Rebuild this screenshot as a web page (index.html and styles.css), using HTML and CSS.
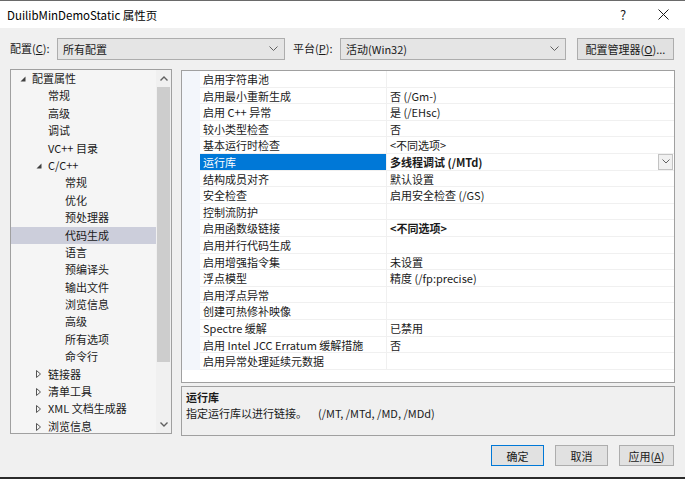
FILE: index.html
```html
<!DOCTYPE html>
<html lang="zh-CN">
<head>
    <meta charset="UTF-8">
    <title>DuilibMinDemoStatic 属性页</title>
    <link rel="stylesheet" href="styles.css">
</head>
<body>
<div class="dialog">
    <div class="titlebar">
        <span class="title">DuilibMinDemoStatic 属性页</span>
        <span class="help">?</span>
        <span class="close">
            <svg width="11" height="11" viewBox="0 0 11 11"><path d="M0.5 0.5 L10.5 10.5 M10.5 0.5 L0.5 10.5" stroke="#1a1a1a" stroke-width="1"/></svg>
        </span>
    </div>

    <div class="toolbar">
        <span class="lbl">配置(<u>C</u>):</span>
        <div class="combo combo-config">
            <span>所有配置</span>
            <svg class="chev" width="9" height="5" viewBox="0 0 9 5"><path d="M0.5 0.5 L4.5 4.5 L8.5 0.5" fill="none" stroke="#606060"/></svg>
        </div>
        <span class="lbl lbl-platform">平台(<u>P</u>):</span>
        <div class="combo combo-platform">
            <span>活动(Win32)</span>
            <svg class="chev" width="9" height="5" viewBox="0 0 9 5"><path d="M0.5 0.5 L4.5 4.5 L8.5 0.5" fill="none" stroke="#606060"/></svg>
        </div>
        <button class="btn btn-manager">配置管理器(<u>O</u>)...</button>
    </div>

    <div class="main">
        <div class="tree">
            <ul class="tree-list">
                <li class="node lv0"><span class="arrow"><svg width="6" height="6" viewBox="0 0 6 6"><path d="M5.5 0.5 L5.5 5.5 L0.5 5.5 Z" fill="#404040"/></svg></span>配置属性</li>
                <li class="node lv1"><span class="arrow"></span>常规</li>
                <li class="node lv1"><span class="arrow"></span>高级</li>
                <li class="node lv1"><span class="arrow"></span>调试</li>
                <li class="node lv1"><span class="arrow"></span>VC++ 目录</li>
                <li class="node lv1"><span class="arrow"><svg width="6" height="6" viewBox="0 0 6 6"><path d="M5.5 0.5 L5.5 5.5 L0.5 5.5 Z" fill="#404040"/></svg></span>C/C++</li>
                <li class="node lv2"><span class="arrow"></span>常规</li>
                <li class="node lv2"><span class="arrow"></span>优化</li>
                <li class="node lv2"><span class="arrow"></span>预处理器</li>
                <li class="node lv2 selected"><span class="arrow"></span>代码生成</li>
                <li class="node lv2"><span class="arrow"></span>语言</li>
                <li class="node lv2"><span class="arrow"></span>预编译头</li>
                <li class="node lv2"><span class="arrow"></span>输出文件</li>
                <li class="node lv2"><span class="arrow"></span>浏览信息</li>
                <li class="node lv2"><span class="arrow"></span>高级</li>
                <li class="node lv2"><span class="arrow"></span>所有选项</li>
                <li class="node lv2"><span class="arrow"></span>命令行</li>
                <li class="node lv1"><span class="arrow"><svg width="5" height="8" viewBox="0 0 5 8"><path d="M0.5 0.5 L4.5 4 L0.5 7.5 Z" fill="none" stroke="#555"/></svg></span>链接器</li>
                <li class="node lv1"><span class="arrow"><svg width="5" height="8" viewBox="0 0 5 8"><path d="M0.5 0.5 L4.5 4 L0.5 7.5 Z" fill="none" stroke="#555"/></svg></span>清单工具</li>
                <li class="node lv1"><span class="arrow"><svg width="5" height="8" viewBox="0 0 5 8"><path d="M0.5 0.5 L4.5 4 L0.5 7.5 Z" fill="none" stroke="#555"/></svg></span>XML 文档生成器</li>
                <li class="node lv1"><span class="arrow"><svg width="5" height="8" viewBox="0 0 5 8"><path d="M0.5 0.5 L4.5 4 L0.5 7.5 Z" fill="none" stroke="#555"/></svg></span>浏览信息</li>
            </ul>
            <div class="vscroll">
                <div class="sb-btn"><svg width="8" height="5" viewBox="0 0 8 5"><path d="M0.5 4.5 L4 1 L7.5 4.5" fill="none" stroke="#606060" stroke-width="1.4"/></svg></div>
                <div class="sb-track"><div class="sb-thumb"></div></div>
                <div class="sb-btn"><svg width="8" height="5" viewBox="0 0 8 5"><path d="M0.5 0.5 L4 4 L7.5 0.5" fill="none" stroke="#606060" stroke-width="1.4"/></svg></div>
            </div>
        </div>

        <div class="right">
            <div class="grid">
                <div class="row"><div class="gutter"></div><div class="name">启用字符串池</div><div class="value"></div></div>
                <div class="row"><div class="gutter"></div><div class="name">启用最小重新生成</div><div class="value">否 (/Gm-)</div></div>
                <div class="row"><div class="gutter"></div><div class="name">启用 C++ 异常</div><div class="value">是 (/EHsc)</div></div>
                <div class="row"><div class="gutter"></div><div class="name">较小类型检查</div><div class="value">否</div></div>
                <div class="row"><div class="gutter"></div><div class="name">基本运行时检查</div><div class="value">&lt;不同选项&gt;</div></div>
                <div class="row active"><div class="gutter"></div><div class="name">运行库</div><div class="value bold">多线程调试 (/MTd)<span class="drop"><svg width="8" height="5" viewBox="0 0 8 5"><path d="M0.5 0.5 L4 4 L7.5 0.5" fill="none" stroke="#606060"/></svg></span></div></div>
                <div class="row"><div class="gutter"></div><div class="name">结构成员对齐</div><div class="value">默认设置</div></div>
                <div class="row"><div class="gutter"></div><div class="name">安全检查</div><div class="value">启用安全检查 (/GS)</div></div>
                <div class="row"><div class="gutter"></div><div class="name">控制流防护</div><div class="value"></div></div>
                <div class="row"><div class="gutter"></div><div class="name">启用函数级链接</div><div class="value bold">&lt;不同选项&gt;</div></div>
                <div class="row"><div class="gutter"></div><div class="name">启用并行代码生成</div><div class="value"></div></div>
                <div class="row"><div class="gutter"></div><div class="name">启用增强指令集</div><div class="value">未设置</div></div>
                <div class="row"><div class="gutter"></div><div class="name">浮点模型</div><div class="value">精度 (/fp:precise)</div></div>
                <div class="row"><div class="gutter"></div><div class="name">启用浮点异常</div><div class="value"></div></div>
                <div class="row"><div class="gutter"></div><div class="name">创建可热修补映像</div><div class="value"></div></div>
                <div class="row"><div class="gutter"></div><div class="name">Spectre 缓解</div><div class="value">已禁用</div></div>
                <div class="row"><div class="gutter"></div><div class="name">启用 Intel JCC Erratum 缓解措施</div><div class="value">否</div></div>
                <div class="row"><div class="gutter"></div><div class="name">启用异常处理延续元数据</div><div class="value"></div></div>
            </div>
            <div class="desc">
                <div class="desc-title">运行库</div>
                <div class="desc-text"><span class="desc-main">指定运行库以进行链接。</span>(/MT, /MTd, /MD, /MDd)</div>
            </div>
        </div>
    </div>

    <div class="footer">
        <button class="btn btn-ok">确定</button>
        <button class="btn">取消</button>
        <button class="btn btn-apply">应用(<u>A</u>)</button>
    </div>
</div>
</body>
</html>
```

FILE: styles.css
```css
* {
    box-sizing: border-box;
}
body {
    margin: 0;
    font-family: "Noto Sans CJK SC", "Noto Sans", sans-serif;
    font-size: 11px;
    color: #1a1a1a;
    background-color: #f0f0f0;
}
u {
    text-decoration: underline;
    text-underline-offset: 1px;
}
.dialog {
    width: 685px;
    height: 479px;
    background-color: #f0f0f0;
    border-top: 1px solid #6a6a6a;
    border-bottom: 2px solid #2b2b2b;
    display: flex;
    flex-direction: column;
    overflow: hidden;
}
.titlebar {
    height: 27px;
    background-color: #fff;
    display: flex;
    align-items: center;
    padding-left: 7px;
}
.title {
    font-size: 11.5px;
    color: #000;
    flex: 1;
}
.help {
    font-size: 13px;
    color: #1a1a1a;
    width: 36px;
    text-align: center;
}
.close {
    width: 44px;
    display: flex;
    justify-content: center;
}
.toolbar {
    display: flex;
    align-items: center;
    height: 21px;
    margin-top: 10px;
    padding-left: 10px;
}
.lbl {
    width: 47px;
    line-height: 21px;
}
.lbl-platform {
    margin-left: 8px;
}
.combo {
    height: 22px;
    border: 1px solid #adadad;
    background-color: #e5e5e5;
    display: flex;
    align-items: center;
    justify-content: space-between;
    padding: 0 6px 0 5px;
}
.combo-config {
    width: 228px;
}
.combo-platform {
    width: 226px;
}
.btn {
    font-family: inherit;
    font-size: 11px;
    color: #1a1a1a;
    background-color: #e1e1e1;
    border: 1px solid #adadad;
    height: 21px;
    padding: 0;
    margin: 0;
}
.btn-manager {
    width: 97px;
    height: 22px;
    margin-left: 11px;
}
.main {
    display: flex;
    height: 367px;
    margin-top: 10px;
    padding-left: 10px;
}
.tree {
    width: 162px;
    height: 365px;
    border: 1px solid #a0a0a0;
    background-color: #f5f5f5;
    display: flex;
    overflow: hidden;
}
.tree-list {
    list-style: none;
    margin: 0;
    padding: 0;
    width: 145px;
    overflow: hidden;
}
.node {
    height: 17.4px;
    line-height: 17.4px;
    display: flex;
    align-items: center;
    white-space: nowrap;
}
.node.lv0 {
    padding-left: 5px;
}
.node.lv1 {
    padding-left: 21px;
}
.node.lv2 {
    padding-left: 38px;
}
.node.selected {
    background-color: #cccedb;
}
.arrow {
    width: 16px;
    display: flex;
    align-items: center;
    padding-left: 4px;
}
.vscroll {
    width: 15px;
    display: flex;
    flex-direction: column;
    background-color: #f0f0f0;
}
.sb-btn {
    height: 17px;
    display: flex;
    align-items: center;
    justify-content: center;
}
.sb-track {
    flex: 1;
    padding: 0 1px;
}
.sb-thumb {
    height: 275px;
    background-color: #cdcdcd;
}
.right {
    margin-left: 9px;
    width: 494px;
    display: flex;
    flex-direction: column;
}
.grid {
    height: 313px;
    margin-top: 1px;
    border: 1px solid #a0a0a0;
    background-color: #fff;
}
.row {
    display: flex;
    height: 16.6px;
    line-height: 14.6px;
}
.gutter {
    width: 18px;
    background-color: #f3f6fb;
}
.name {
    width: 187px;
    padding: 1px 0 0 3px;
    border-right: 1px solid #f0f0f0;
    border-bottom: 1px solid #f0f0f0;
    white-space: nowrap;
    overflow: hidden;
}
.value {
    flex: 1;
    padding: 1px 0 0 3px;
    border-bottom: 1px solid #f0f0f0;
    display: flex;
    align-items: center;
    white-space: nowrap;
}
.bold {
    font-weight: bold;
}
.row.active .name {
    background-color: #0078d7;
    color: #fff;
}
.drop {
    margin-left: auto;
    margin-right: 1px;
    margin-top: -1px;
    width: 15px;
    height: 16px;
    border: 1px solid #c3c3c3;
    background-color: #f0f0f0;
    display: flex;
    align-items: center;
    justify-content: center;
}
.desc {
    height: 50px;
    margin-top: 3px;
    border: 1px solid #a0a0a0;
    padding: 2px 4px;
    line-height: 16px;
}
.desc-title {
    font-weight: bold;
}
.desc-main {
    display: inline-block;
    width: 132px;
}
.footer {
    display: flex;
    justify-content: flex-end;
    gap: 11px;
    padding: 9px 11px 0 0;
}
.footer .btn {
    width: 53px;
}
.footer .btn-apply {
    width: 55px;
}
.btn-ok {
    border-color: #0078d7;
}
```
